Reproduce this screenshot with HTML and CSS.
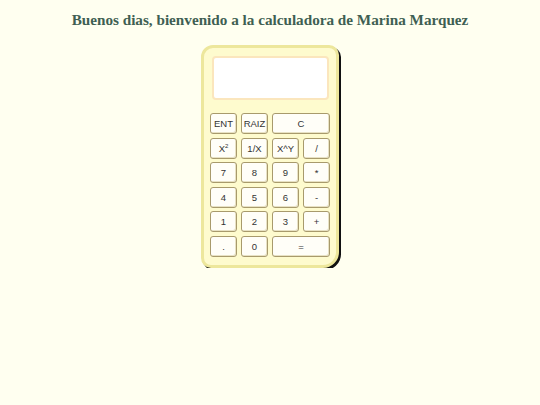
FILE: index.html
```html
<!DOCTYPE html>
<html lang="es">
<head>
<meta charset="utf-8">
<title>Calculadora</title>
<link rel="stylesheet" href="styles.css">
</head>
<body>
<h1 class="title">Buenos dias, bienvenido a la calculadora de Marina Marquez</h1>
<div class="calc">
  <div class="display"></div>
  <div class="keys">
    <button class="key">ENT</button>
    <button class="key">RAIZ</button>
    <button class="key wide">C</button>
    <button class="key">X<sup>2</sup></button>
    <button class="key">1/X</button>
    <button class="key">X^Y</button>
    <button class="key">/</button>
    <button class="key">7</button>
    <button class="key">8</button>
    <button class="key">9</button>
    <button class="key">*</button>
    <button class="key">4</button>
    <button class="key">5</button>
    <button class="key">6</button>
    <button class="key">-</button>
    <button class="key">1</button>
    <button class="key">2</button>
    <button class="key">3</button>
    <button class="key">+</button>
    <button class="key">.</button>
    <button class="key">0</button>
    <button class="key wide">=</button>
  </div>
</div>
</body>
</html>
```
FILE: styles.css
```css
html, body {
  margin: 0;
  padding: 0;
  background: #fffff0;
}
body {
  padding-top: 10px;
}
.title {
  margin: 0 0 15px;
  text-align: center;
  font-family: "Liberation Serif", "Times New Roman", serif;
  font-weight: bold;
  font-size: 15.2px;
  line-height: 20px;
  color: #3f5f53;
}
.calc {
  width: 120px;
  margin: 0 auto;
  background: #fefbce;
  border: 3px solid #ede79c;
  border-radius: 12px 10px 16px 10px;
  box-shadow: 2px 2px 0 #111;
  padding: 8px 6px;
}
.display {
  margin: 0 1px 13px 2px;
  background: #fff;
  border: 2px solid #fbe6bd;
  border-radius: 4px;
  box-sizing: border-box;
  height: 44px;
}
.keys {
  display: grid;
  grid-template-columns: repeat(4, 27px);
  grid-auto-rows: 21px;
  column-gap: 4px;
  row-gap: 3.6px;
}
.key {
  margin: 0;
  padding: 0;
  background: #fffef8;
  border: 1px solid #a89a6c;
  border-radius: 3px;
  font-family: "Liberation Sans", Arial, sans-serif;
  font-size: 9.5px;
  color: #333;
  box-shadow: inset -1px -1px 0 #e8e2c4;
}
.key sup {
  font-size: 6px;
  vertical-align: 4px;
  line-height: 0;
}
.wide {
  grid-column: span 2;
}
```
